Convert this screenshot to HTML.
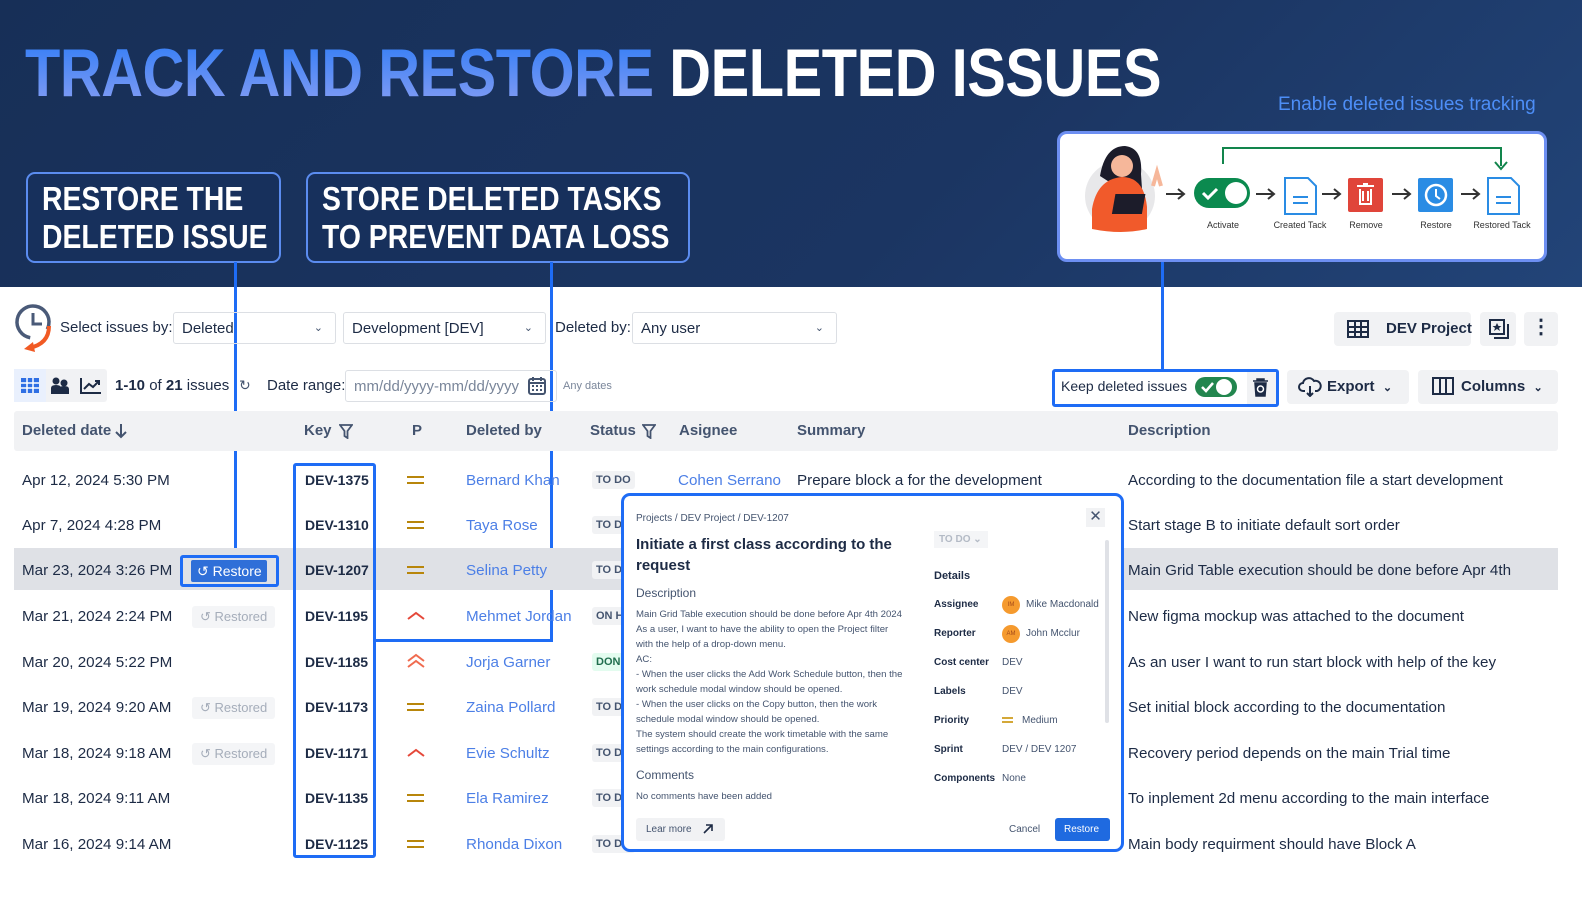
<!DOCTYPE html>
<html><head><meta charset="utf-8"><style>
*{box-sizing:border-box;margin:0;padding:0}
body{width:1582px;height:900px;overflow:hidden;background:#fff;font-family:"Liberation Sans",Arial,sans-serif;color:#1d2b45;position:relative}
.a{position:absolute}
.hdr{left:0;top:0;width:1582px;height:287px;background:linear-gradient(135deg,#172f57 0%,#1b3562 60%,#224478 100%)}
.title{left:25px;top:34px;font-size:68px;font-weight:bold;white-space:nowrap;transform:scaleX(.85);transform-origin:left top;letter-spacing:-0.5px}
.title .b{background:linear-gradient(180deg,#2d7bf6,#8a9ff3);-webkit-background-clip:text;background-clip:text;color:transparent}
.title .w{color:#fff}
.cbox{border:2.5px solid #5b8cf0;border-radius:9px;background:#17305c;color:#fff;font-weight:bold;font-size:33px;line-height:38px;padding:6px 0 0 14px}
.cbox span{display:inline-block;transform:scaleX(.86);transform-origin:left top;white-space:nowrap}
.vl{background:#1e6cf5;width:3px}
.hl{background:#1e6cf5;height:3px}
.sel{border:1.5px solid #dcdfe4;border-radius:3px;height:32px;font-size:15px;padding:7px 8px;color:#1d2b45;white-space:nowrap}
.chev{position:absolute;right:12px;top:8px;font-size:11px;color:#44546f}
.gbtn{background:#f1f2f4;border-radius:4px;font-size:15px;color:#1d2b45;white-space:nowrap}
.row{left:14px;width:1544px;height:44px;font-size:15.2px}
.row div{position:absolute;top:14px;white-space:nowrap}
.lnk{color:#4c7fe6}
.key{font-weight:bold;font-size:14px}
.st{font-size:11px;font-weight:bold;background:#f1f2f4;padding:3px 4px;border-radius:3px;color:#44546f;top:13px!important}
.pm{width:17px;height:8px;border-top:2.5px solid #b8860b;border-bottom:2.5px solid #b8860b;top:18px!important}
.rsd{font-size:13px;color:#a5adba;background:#f4f5f7;padding:3px 8px;border-radius:3px;top:12px!important}
.pop{left:621px;top:493px;width:503px;height:359px;border:3px solid #1e6cf5;border-radius:9px;background:#fff}
.pop .a{white-space:nowrap}
.dl{font-size:10px;font-weight:bold;color:#1d2b45}
.dv{font-size:10px;color:#44546f}
</style></head><body>
<div class="a hdr"></div>
<div class="a title"><span class="b">TRACK AND RESTORE</span> <span class="w">DELETED ISSUES</span></div>
<div class="a" style="left:1278px;top:94px;font-size:19px;color:#4d8ef7;white-space:nowrap">Enable deleted issues tracking</div>
<div class="a cbox" style="left:26px;top:172px;width:255px;height:91px"><span>RESTORE THE<br>DELETED ISSUE</span></div>
<div class="a cbox" style="left:306px;top:172px;width:384px;height:91px"><span>STORE DELETED TASKS<br>TO PREVENT DATA LOSS</span></div>

<!-- diagram -->
<div class="a" style="left:1057px;top:131px;width:490px;height:131px;border:3px solid #6d8ff2;border-radius:10px;background:#fff"></div>
<svg class="a" style="left:1060px;top:134px" width="484" height="125" viewBox="0 0 484 125">
<circle cx="60" cy="62" r="35" fill="#e8e8ea"/>
<path d="M40 42 q5-30 25-30 q18 2 16 28 l2 30 q-10 5-15-10z" fill="#1c1c2a"/>
<circle cx="62" cy="32" r="11" fill="#f6b79a"/>
<path d="M32 75 q5-30 30-32 q22 0 25 30 l0 22 q-25 6-55 0z" fill="#f15a2b"/>
<rect x="66" y="60" width="30" height="20" fill="#1c1c2a" transform="skewX(-10)"/>
<path d="M93 52 l4-14 l4 14" stroke="#f6b79a" stroke-width="4" fill="none"/>
<path d="M106 60h18m-6-5l6 5l-6 5" stroke="#333" stroke-width="2" fill="none"/>
<rect x="134" y="44" width="56" height="30" rx="15" fill="#0b8a4f"/><circle cx="176" cy="59" r="11" fill="#fff"/><path d="M143 59l5 5l9-9" stroke="#fff" stroke-width="3" fill="none"/>
<path d="M163 30v-16h278v18" stroke="#12854c" stroke-width="2" fill="none"/><path d="M435 28l6 7l6-7" stroke="#12854c" stroke-width="2" fill="none"/>
<path d="M196 60h18m-6-5l6 5l-6 5" stroke="#333" stroke-width="2" fill="none"/>
<path d="M225 44h23l8 8v28h-31z" fill="#fff" stroke="#2a8ce4" stroke-width="2"/><path d="M233 63h15M233 69h15" stroke="#2a8ce4" stroke-width="2"/>
<path d="M262 60h18m-6-5l6 5l-6 5" stroke="#333" stroke-width="2" fill="none"/>
<rect x="288" y="44" width="35" height="34" rx="2" fill="#e0453a"/><path d="M297 52h17M300 55v15h11v-15M303 50h5M303 57v10M308 57v10" stroke="#fff" stroke-width="2" fill="none"/>
<path d="M332 60h18m-6-5l6 5l-6 5" stroke="#333" stroke-width="2" fill="none"/>
<rect x="358" y="44" width="35" height="34" rx="2" fill="#2a8ce4"/><circle cx="376" cy="61" r="10" stroke="#fff" stroke-width="2.5" fill="none"/><path d="M376 55v7l4 3" stroke="#fff" stroke-width="2" fill="none"/>
<path d="M401 60h18m-6-5l6 5l-6 5" stroke="#333" stroke-width="2" fill="none"/>
<path d="M428 44h23l8 8v28h-31z" fill="#fff" stroke="#2a8ce4" stroke-width="2"/><path d="M436 63h15M436 69h15" stroke="#2a8ce4" stroke-width="2"/>
<g font-family="Liberation Sans" font-size="9" fill="#333" text-anchor="middle"><text x="163" y="94">Activate</text><text x="240" y="94">Created Tack</text><text x="306" y="94">Remove</text><text x="376" y="94">Restore</text><text x="442" y="94">Restored Tack</text></g>
</svg>

<!-- connectors -->
<div class="a vl" style="left:234px;top:262px;height:294px"></div>
<div class="a vl" style="left:550px;top:262px;height:380px"></div>
<div class="a hl" style="left:375px;top:639px;width:178px"></div>
<div class="a vl" style="left:1161px;top:262px;height:107px"></div>

<!-- toolbar 1 -->
<svg class="a" style="left:13px;top:302px" width="42" height="52" viewBox="0 0 42 52"><circle cx="20" cy="20" r="16" stroke="#4a5a78" stroke-width="3.5" fill="none" stroke-dasharray="80 30" transform="rotate(100 20 20)"/><path d="M20 11v11h9" stroke="#4a5a78" stroke-width="3" fill="none"/><path d="M36 24q0 18-20 22" stroke="#f15a24" stroke-width="4" fill="none"/><path d="M20 40l-9 7l11 3z" fill="#f15a24"/></svg>
<div class="a" style="left:60px;top:319px;font-size:15px">Select issues by:</div>
<div class="a sel" style="left:173px;top:312px;width:163px">Deleted<span class="chev">&#8964;</span></div>
<div class="a sel" style="left:343px;top:312px;width:203px">Development [DEV]<span class="chev">&#8964;</span></div>
<div class="a" style="left:555px;top:319px;font-size:15px">Deleted by:</div>
<div class="a sel" style="left:632px;top:312px;width:205px">Any user<span class="chev">&#8964;</span></div>
<div class="a gbtn" style="left:1334px;top:312px;width:137px;height:34px;padding:8px 0 0 52px;font-weight:bold">DEV Project</div>
<svg class="a" style="left:1347px;top:320px" width="22" height="18"><rect x="1" y="1" width="20" height="16" stroke="#1d2b45" stroke-width="2" fill="none"/><path d="M1 7h20M1 12h20M8 1v16M14 1v16" stroke="#1d2b45" stroke-width="2"/></svg>
<div class="a gbtn" style="left:1480px;top:312px;width:36px;height:34px"></div>
<svg class="a" style="left:1489px;top:319px" width="20" height="20"><rect x="1" y="1" width="14" height="14" stroke="#1d2b45" stroke-width="2" fill="none"/><path d="M5 19h14v-14" stroke="#1d2b45" stroke-width="2" fill="none"/><path d="M8 4l1.5 3h3l-2.5 2l1 3l-3-2l-3 2l1-3l-2.5-2h3z" fill="#1d2b45"/></svg>
<div class="a gbtn" style="left:1524px;top:312px;width:34px;height:34px;text-align:center;font-weight:bold;font-size:20px;line-height:30px">&#8942;</div>

<!-- toolbar 2 -->
<div class="a" style="left:14px;top:369px;width:93px;height:33px;background:#f1f2f4;border-radius:3px"></div>
<div class="a" style="left:14px;top:369px;width:32px;height:33px;background:#e9f0fd"></div>
<svg class="a" style="left:20px;top:377px" width="20" height="17"><rect x="1" y="1" width="18" height="15" fill="#2f6fe4"/><path d="M1 6h18M1 11h18M7 1v15M13 1v15" stroke="#fff" stroke-width="1.5"/></svg>
<svg class="a" style="left:50px;top:376px" width="20" height="19"><circle cx="6" cy="5" r="3.5" fill="#1d2b45"/><circle cx="14" cy="7" r="3.5" fill="#1d2b45"/><path d="M1 18v-6q0-3 5-3q5 0 5 3v6zM9 18v-5q0-3 5-3q5 0 5 3v5z" fill="#1d2b45"/></svg>
<svg class="a" style="left:80px;top:377px" width="22" height="17"><path d="M1 1v15h20" stroke="#1d2b45" stroke-width="2" fill="none"/><path d="M4 12l5-5l4 3l6-6M15 4h4v4" stroke="#1d2b45" stroke-width="2" fill="none"/></svg>
<div class="a" style="left:115px;top:377px;font-size:15px"><b>1-10</b> of <b>21</b> issues</div>
<div class="a" style="left:239px;top:377px;font-size:14px;color:#44546f">&#x21BB;</div>
<div class="a" style="left:267px;top:377px;font-size:15px">Date range:</div>
<div class="a sel" style="left:345px;top:370px;width:212px;color:#7a869a">mm/dd/yyyy-mm/dd/yyyy</div>
<svg class="a" style="left:528px;top:376px" width="18" height="19"><rect x="1" y="3" width="16" height="15" rx="2" stroke="#44546f" stroke-width="2" fill="none"/><path d="M1 7h16M5 1v4M13 1v4" stroke="#44546f" stroke-width="2"/><path d="M4 10h2M8 10h2M12 10h2M4 14h2M8 14h2M12 14h2" stroke="#44546f" stroke-width="2"/></svg>
<div class="a" style="left:563px;top:380px;font-size:11px;color:#7a869a">Any dates</div>

<div class="a" style="left:1052px;top:369px;width:227px;height:38px;border:3px solid #1e6cf5;border-radius:3px"></div>
<div class="a" style="left:1061px;top:378px;font-size:14px">Keep deleted issues</div>
<div class="a" style="left:1195px;top:377px;width:42px;height:20px;background:#22864e;border-radius:10px"></div>
<div class="a" style="left:1216px;top:379px;width:16px;height:16px;background:#fff;border-radius:50%"></div>
<svg class="a" style="left:1200px;top:381px" width="14" height="12"><path d="M2 6l4 4l7-8" stroke="#fff" stroke-width="2.5" fill="none"/></svg>
<div class="a" style="left:1247px;top:372px;width:29px;height:32px;background:#f1f2f4"></div>
<svg class="a" style="left:1252px;top:377px" width="17" height="20"><path d="M1 4h15M5 4v-2h7v2M3 6h11l-1 13h-9z" fill="#1d2b45" stroke="#1d2b45" stroke-width="1.5"/><circle cx="8.5" cy="12" r="3" stroke="#fff" stroke-width="1.5" fill="none"/></svg>
<div class="a gbtn" style="left:1287px;top:370px;width:122px;height:34px;padding:8px 0 0 40px;font-weight:bold">Export &nbsp;<span style="font-size:11px">&#8964;</span></div>
<svg class="a" style="left:1298px;top:377px" width="24" height="20"><path d="M7 14h-2a4 4 0 0 1 0-8a6 6 0 0 1 11-2a4.5 4.5 0 0 1 3 10h-2" stroke="#1d2b45" stroke-width="2" fill="none"/><path d="M12 9v10m-3-3l3 3l3-3" stroke="#1d2b45" stroke-width="2" fill="none"/></svg>
<div class="a gbtn" style="left:1418px;top:370px;width:140px;height:34px;padding:8px 0 0 43px;font-weight:bold">Columns &nbsp;<span style="font-size:11px">&#8964;</span></div>
<svg class="a" style="left:1432px;top:377px" width="22" height="18"><rect x="1" y="1" width="20" height="16" stroke="#1d2b45" stroke-width="2" fill="none"/><path d="M8 1v16M14 1v16" stroke="#1d2b45" stroke-width="2"/></svg>

<!-- table header -->
<div class="a" style="left:14px;top:411px;width:1544px;height:40px;background:#f1f2f4;border-radius:3px"></div>
<div class="a" style="top:422px;left:0;width:1582px;font-size:15px;font-weight:bold;color:#44546f">
<span class="a" style="left:22px;white-space:nowrap">Deleted date</span>
<svg class="a" style="left:114px;top:1px" width="14" height="16"><path d="M7 1v13M2 9l5 5l5-5" stroke="#44546f" stroke-width="2" fill="none"/></svg>
<span class="a" style="left:304px">Key</span>
<svg class="a" style="left:339px;top:2px" width="14" height="15"><path d="M1 1h12l-4.5 6v7l-3-2v-5z" stroke="#44546f" stroke-width="1.8" fill="none"/></svg>
<span class="a" style="left:412px">P</span>
<span class="a" style="left:466px;white-space:nowrap">Deleted by</span>
<span class="a" style="left:590px">Status</span>
<svg class="a" style="left:642px;top:2px" width="14" height="15"><path d="M1 1h12l-4.5 6v7l-3-2v-5z" stroke="#44546f" stroke-width="1.8" fill="none"/></svg>
<span class="a" style="left:679px">Asignee</span>
<span class="a" style="left:797px">Summary</span>
<span class="a" style="left:1128px">Description</span>
</div>

<!-- rows -->
<div class="a row" style="top:458px"><div style="left:8px">Apr 12, 2024 5:30 PM</div><div class="key" style="left:291px">DEV-1375</div><div class="pm" style="left:393px"></div><div class="lnk" style="left:452px">Bernard Khan</div><div class="st" style="left:578px">TO DO</div><div class="lnk" style="left:664px">Cohen Serrano</div><div style="left:783px">Prepare block a for the development</div><div style="left:1114px">According to the documentation file a start development</div></div>
<div class="a row" style="top:503px"><div style="left:8px">Apr 7, 2024 4:28 PM</div><div class="key" style="left:291px">DEV-1310</div><div class="pm" style="left:393px"></div><div class="lnk" style="left:452px">Taya Rose</div><div class="st" style="left:578px">TO DO</div><div style="left:1114px">Start stage B to initiate default sort order</div></div>
<div class="a row" style="top:548px;background:#dfe1e6;height:42px"><div style="left:8px">Mar 23, 2024 3:26 PM</div><div class="key" style="left:291px">DEV-1207</div><div class="pm" style="left:393px"></div><div class="lnk" style="left:452px">Selina Petty</div><div class="st" style="left:578px">TO DO</div><div style="left:1114px">Main Grid Table execution should be done before Apr 4th</div></div>
<div class="a" style="left:180px;top:555px;width:99px;height:32px;border:3px solid #1e6cf5;border-radius:3px"></div>
<div class="a" style="left:191px;top:560px;width:76px;height:22px;background:#2f6fd8;border-radius:2px;color:#fff;font-size:14px;padding:3px 0 0 6px">&#x21BA; Restore</div>
<div class="a row" style="top:594px"><div style="left:8px">Mar 21, 2024 2:24 PM</div><div class="rsd" style="left:178px">&#x21BA; Restored</div><div class="key" style="left:291px">DEV-1195</div><svg class="a" style="left:393px;top:17px" width="18" height="10"><path d="M1 8l8-6l8 6" stroke="#e5483a" stroke-width="2" fill="none"/></svg><div class="lnk" style="left:452px">Mehmet Jordan</div><div class="st" style="left:578px">ON HOLD</div><div style="left:1114px">New figma mockup was attached to the document</div></div>
<div class="a row" style="top:640px"><div style="left:8px">Mar 20, 2024 5:22 PM</div><div class="key" style="left:291px">DEV-1185</div><svg class="a" style="left:393px;top:13px" width="18" height="16"><path d="M1 8l8-6l8 6M1 14l8-6l8 6" stroke="#f06b4f" stroke-width="2" fill="none"/></svg><div class="lnk" style="left:452px">Jorja Garner</div><div class="st" style="left:578px;background:#e3fcef;color:#216e4e">DONE</div><div style="left:1114px">As an user I want to run start block with help of the key</div></div>
<div class="a row" style="top:685px"><div style="left:8px">Mar 19, 2024 9:20 AM</div><div class="rsd" style="left:178px">&#x21BA; Restored</div><div class="key" style="left:291px">DEV-1173</div><div class="pm" style="left:393px"></div><div class="lnk" style="left:452px">Zaina Pollard</div><div class="st" style="left:578px">TO DO</div><div style="left:1114px">Set initial block according to the documentation</div></div>
<div class="a row" style="top:731px"><div style="left:8px">Mar 18, 2024 9:18 AM</div><div class="rsd" style="left:178px">&#x21BA; Restored</div><div class="key" style="left:291px">DEV-1171</div><svg class="a" style="left:393px;top:17px" width="18" height="10"><path d="M1 8l8-6l8 6" stroke="#e5483a" stroke-width="2" fill="none"/></svg><div class="lnk" style="left:452px">Evie Schultz</div><div class="st" style="left:578px">TO DO</div><div style="left:1114px">Recovery period depends on the main Trial time</div></div>
<div class="a row" style="top:776px"><div style="left:8px">Mar 18, 2024 9:11 AM</div><div class="key" style="left:291px">DEV-1135</div><div class="pm" style="left:393px"></div><div class="lnk" style="left:452px">Ela Ramirez</div><div class="st" style="left:578px">TO DO</div><div style="left:1114px">To inplement 2d menu according to the main interface</div></div>
<div class="a row" style="top:822px"><div style="left:8px">Mar 16, 2024 9:14 AM</div><div class="key" style="left:291px">DEV-1125</div><div class="pm" style="left:393px"></div><div class="lnk" style="left:452px">Rhonda Dixon</div><div class="st" style="left:578px">TO DO</div><div style="left:1114px">Main body requirment should have Block A</div></div>

<div class="a" style="left:293px;top:463px;width:83px;height:395px;border:3px solid #1e6cf5;border-radius:3px"></div>

<!-- popup -->
<div class="a pop">
<div class="a" style="left:12px;top:17px;font-size:10px;color:#44546f">Projects / DEV Project / DEV-1207</div>
<div class="a" style="left:462px;top:12px;width:19px;height:19px;background:#f1f2f4;text-align:center;font-size:15px;line-height:18px;color:#44546f">&#x2715;</div>
<div class="a" style="left:12px;top:38px;font-size:15px;font-weight:bold;line-height:21px;white-space:normal;width:270px">Initiate a first class according to the request</div>
<div class="a" style="left:310px;top:35px;width:54px;height:17px;background:#f4f5f7;font-size:10px;color:#b3bac5;padding:3px 0 0 5px;font-weight:bold">TO DO &#8964;</div>
<div class="a" style="left:12px;top:90px;font-size:12px;color:#44546f">Description</div>
<div class="a" style="left:12px;top:111px;font-size:9.6px;line-height:15px;color:#44546f">Main Grid Table execution should be done before Apr 4th 2024<br>As a user, I want to have the ability to open the Project filter<br>with the help of a drop-down menu.<br>AC:<br>- When the user clicks the Add Work Schedule button, then the<br>work schedule modal window should be opened.<br>- When the user clicks on the Copy button, then the work<br>schedule modal window should be opened.<br>The system should create the work timetable with the same<br>settings according to the main configurations.</div>
<div class="a" style="left:12px;top:272px;font-size:12px;color:#44546f">Comments</div>
<div class="a" style="left:12px;top:295px;font-size:9.6px;color:#44546f">No comments have been added</div>
<div class="a" style="left:12px;top:322px;width:89px;height:23px;background:#f1f2f4;border-radius:3px;font-size:10px;padding:6px 0 0 10px;color:#44546f">Lear more</div>
<svg class="a" style="left:78px;top:327px" width="12" height="12"><path d="M2 10l8-8M4 2h6v6" stroke="#1d2b45" stroke-width="1.6" fill="none"/></svg>
<div class="a" style="left:385px;top:328px;font-size:10px;color:#44546f">Cancel</div>
<div class="a" style="left:431px;top:322px;width:55px;height:23px;background:#1f6ae0;border-radius:3px;font-size:10px;color:#fff;padding:6px 0 0 9px">Restore</div>
<div class="a" style="left:310px;top:74px;font-size:11px;font-weight:bold">Details</div>
<div class="a dl" style="left:310px;top:103px">Assignee</div><div class="a" style="left:378px;top:100px;width:18px;height:18px;border-radius:50%;background:#f59a2e;font-size:6px;color:#a4491a;text-align:center;line-height:18px">IM</div><div class="a dv" style="left:402px;top:103px">Mike Macdonald</div>
<div class="a dl" style="left:310px;top:132px">Reporter</div><div class="a" style="left:378px;top:129px;width:18px;height:18px;border-radius:50%;background:#f59a2e;font-size:6px;color:#a4491a;text-align:center;line-height:18px">AM</div><div class="a dv" style="left:402px;top:132px">John Mcclur</div>
<div class="a dl" style="left:310px;top:161px">Cost center</div><div class="a dv" style="left:378px;top:161px">DEV</div>
<div class="a dl" style="left:310px;top:190px">Labels</div><div class="a dv" style="left:378px;top:190px">DEV</div>
<div class="a dl" style="left:310px;top:219px">Priority</div><div class="a" style="left:378px;top:221px;width:11px;height:6px;border-top:2px solid #d4a838;border-bottom:2px solid #d4a838"></div><div class="a dv" style="left:398px;top:219px">Medium</div>
<div class="a dl" style="left:310px;top:248px">Sprint</div><div class="a dv" style="left:378px;top:248px">DEV / DEV 1207</div>
<div class="a dl" style="left:310px;top:277px">Components</div><div class="a dv" style="left:378px;top:277px">None</div>
<div class="a" style="left:481px;top:44px;width:4px;height:183px;background:#dfe1e6;border-radius:2px"></div>
</div>
</body></html>
